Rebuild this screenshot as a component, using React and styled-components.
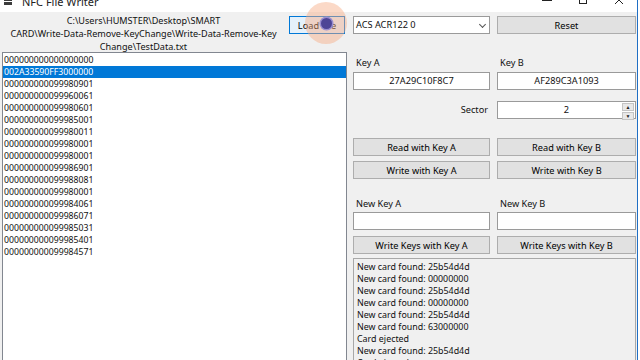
import React from 'react'
import styled, { createGlobalStyle } from 'styled-components'

const GlobalStyle = createGlobalStyle`
    html, body {
        margin: 0;
        padding: 0;
        width: 640px;
        height: 360px;
        overflow: hidden;
        background: #fff;
    }

    body {
        font-family: "Noto Sans", "Open Sans", sans-serif;
        font-size: 9px;
        color: #000;
    }
`;

const Window = styled.div`
    width: 637px;
    height: 400px;
    margin-top: -18px;
    border-right: 1px solid #1f6fc5;
    background: #f0f0f0;
    display: flex;
    flex-direction: column;
    position: relative;
`;

const TitleBar = styled.header`
    height: 30px;
    flex: none;
    background: #fff;
    display: flex;
    align-items: flex-start;
    padding-top: 14px;
    box-sizing: border-box;
    font-size: 11px;
    line-height: 12px;
    color: #222;
`;

const AppIcon = styled.span`
    width: 8px;
    height: 7px;
    margin: 2px 10px 0 4px;
    background: linear-gradient(#3c3c3c 0 45%, transparent 45% 60%, #3c3c3c 60%);
`;

const Controls = styled.div`
    margin-left: auto;
    display: flex;
`;

const ControlBtn = styled.span`
    width: 36px;
    height: 16px;
    display: flex;
    align-items: center;
    justify-content: center;
    margin-top: -4px;
`;

const Body = styled.main`
    flex: 1;
    display: grid;
    grid-template-columns: 345px 283px;
    column-gap: 6px;
    padding-left: 2px;
    min-height: 0;
`;

const LeftCol = styled.section`
    display: flex;
    flex-direction: column;
    min-height: 0;
`;

const FileRow = styled.div`
    height: 40px;
    display: flex;
    align-items: flex-start;
`;

const PathLabel = styled.div`
    width: 283px;
    padding-top: 2px;
    text-align: center;
    font-size: 9.1px;
    line-height: 13px;
    color: #111;
`;

const Button = styled.button`
    height: 18px;
    width: ${p => p.$w || 'auto'};
    margin: ${p => p.$m || '0'};
    padding: 0;
    box-sizing: border-box;
    font-family: inherit;
    font-size: 9.2px;
    color: #000;
    background: ${p => (p.$hover ? '#e5f1fb' : '#e1e1e1')};
    border: 1px solid ${p => (p.$hover ? '#0078d7' : '#adadad')};
    border-radius: 0;
`;

const ListBox = styled.ul`
    list-style: none;
    margin: 0;
    padding: 1px 0 0 0;
    flex: 1;
    background: #fff;
    border: 1px solid #828790;
    font-size: 8.7px;
    line-height: 12px;
`;

const ListItem = styled.li`
    height: 12px;
    padding-left: 1px;
    background: ${p => (p.$selected ? '#0078d7' : 'transparent')};
    color: ${p => (p.$selected ? '#fff' : '#111')};
    white-space: nowrap;
`;

const RightCol = styled.section`
    display: flex;
    flex-direction: column;
    min-height: 0;
`;

const Pair = styled.div`
    display: grid;
    grid-template-columns: 137px 139px;
    column-gap: 7px;
    margin-top: ${p => p.$mt}px;
    height: ${p => p.$h || 18}px;
`;

const Label = styled.div`
    font-size: 9.2px;
    line-height: 12px;
    padding-left: ${p => (p.$right ? 0 : 3)}px;
    padding-right: ${p => (p.$right ? 2 : 0)}px;
    text-align: ${p => (p.$right ? 'right' : 'left')};
    align-self: center;
    color: #111;
`;

const TextBox = styled.div`
    height: 18px;
    box-sizing: border-box;
    background: #fff;
    border: 1px solid #9a9a9a;
    font-size: 9.2px;
    line-height: 16px;
    text-align: ${p => p.$align || 'center'};
    padding-left: ${p => (p.$align === 'left' ? 2 : 0)}px;
    position: relative;
    color: #111;
`;

const Chevron = styled.span`
    position: absolute;
    right: 4px;
    top: 5px;
    width: 4px;
    height: 4px;
    border-right: 1px solid #555;
    border-bottom: 1px solid #555;
    transform: rotate(45deg);
`;

const Spinner = styled.div`
    position: absolute;
    right: 1px;
    top: 1px;
    bottom: 1px;
    width: 12px;
    display: flex;
    flex-direction: column;
    gap: 1px;
`;

const SpinBtn = styled.span`
    flex: 1;
    background: #e8e8e8;
    border: 1px solid #c4c4c4;
    font-size: 5px;
    line-height: 6px;
    text-align: center;
    color: #222;
`;

const Log = styled.div`
    margin-top: 4px;
    flex: 1;
    background: #f0f0f0;
    border: 1px solid #a8a8a8;
    padding: 2px 0 0 3px;
    font-size: 8.9px;
    line-height: 12px;
    color: #111;
    overflow: hidden;
`;

const CursorHalo = styled.div`
    position: absolute;
    left: 305px;
    top: 20px;
    width: 42px;
    height: 42px;
    border-radius: 50%;
    background: rgba(247, 170, 130, 0.45);
    display: flex;
    align-items: center;
    justify-content: center;
`;

const CursorDot = styled.div`
    width: 11px;
    height: 11px;
    border-radius: 50%;
    background: #4d4596;
    box-shadow: 0 0 0 1.5px #9a8fd0;
`;

const items = [
    '000000000000000000',
    '002A33590FF3000000',
    '000000000099980901',
    '000000000099960061',
    '000000000099980601',
    '000000000099985001',
    '000000000099980011',
    '000000000099980001',
    '000000000099980001',
    '000000000099986901',
    '000000000099988081',
    '000000000099980001',
    '000000000099984061',
    '000000000099986071',
    '000000000099985031',
    '000000000099985401',
    '000000000099984571',
]

const log = [
    'New card found: 25b54d4d',
    'New card found: 00000000',
    'New card found: 25b54d4d',
    'New card found: 00000000',
    'New card found: 25b54d4d',
    'New card found: 63000000',
    'Card ejected',
    'New card found: 25b54d4d',
    'Card ejected',
]

export default function App() {
    return (
        <>
            <GlobalStyle />
            <Window>
                <TitleBar>
                    <AppIcon />
                    <span>NFC File Writer</span>
                    <Controls>
                        <ControlBtn>
                            <svg width="10" height="10" viewBox="0 0 10 10"><path d="M0 5.5h10" stroke="#222" strokeWidth="1" /></svg>
                        </ControlBtn>
                        <ControlBtn>
                            <svg width="10" height="10" viewBox="0 0 10 10"><rect x="1.5" y="1.5" width="7" height="7" fill="none" stroke="#222" strokeWidth="1" /></svg>
                        </ControlBtn>
                        <ControlBtn>
                            <svg width="10" height="10" viewBox="0 0 10 10"><path d="M1 1l8 8M9 1l-8 8" stroke="#222" strokeWidth="1" /></svg>
                        </ControlBtn>
                    </Controls>
                </TitleBar>
                <Body>
                    <LeftCol>
                        <FileRow>
                            <PathLabel>
                                C:\Users\HUMSTER\Desktop\SMART<br />
                                CARD\Write-Data-Remove-KeyChange\Write-Data-Remove-Key<br />
                                Change\TestData.txt
                            </PathLabel>
                            <Button $hover $w="56px" $m="4px 0 0 4px">Load File</Button>
                        </FileRow>
                        <ListBox>
                            {items.map((it, i) => (
                                <ListItem key={i} $selected={i === 1}>{it}</ListItem>
                            ))}
                        </ListBox>
                    </LeftCol>
                    <RightCol>
                        <Pair $mt={4}>
                            <TextBox $align="left">
                                ACS ACR122 0
                                <Chevron />
                            </TextBox>
                            <Button>Reset</Button>
                        </Pair>
                        <Pair $mt={23} $h={12}>
                            <Label>Key A</Label>
                            <Label>Key B</Label>
                        </Pair>
                        <Pair $mt={3}>
                            <TextBox>27A29C10F8C7</TextBox>
                            <TextBox>AF289C3A1093</TextBox>
                        </Pair>
                        <Pair $mt={11}>
                            <Label $right>Sector</Label>
                            <TextBox>
                                2
                                <Spinner>
                                    <SpinBtn>▲</SpinBtn>
                                    <SpinBtn>▼</SpinBtn>
                                </Spinner>
                            </TextBox>
                        </Pair>
                        <Pair $mt={19}>
                            <Button>Read with Key A</Button>
                            <Button>Read with Key B</Button>
                        </Pair>
                        <Pair $mt={5}>
                            <Button>Write with Key A</Button>
                            <Button>Write with Key B</Button>
                        </Pair>
                        <Pair $mt={19} $h={12}>
                            <Label>New Key A</Label>
                            <Label>New Key B</Label>
                        </Pair>
                        <Pair $mt={2}>
                            <TextBox />
                            <TextBox />
                        </Pair>
                        <Pair $mt={6}>
                            <Button>Write Keys with Key A</Button>
                            <Button>Write Keys with Key B</Button>
                        </Pair>
                        <Log>
                            {log.map((l, i) => <div key={i}>{l}</div>)}
                        </Log>
                    </RightCol>
                </Body>
                <CursorHalo>
                    <CursorDot />
                </CursorHalo>
            </Window>
        </>
    )
}
